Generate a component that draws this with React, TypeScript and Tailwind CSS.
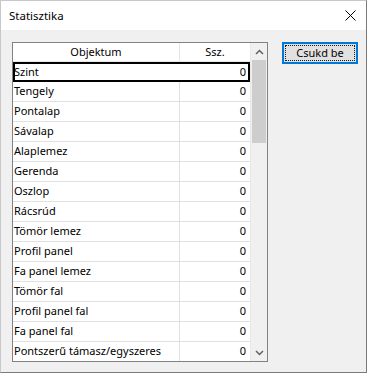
const rows = [
  "Szint",
  "Tengely",
  "Pontalap",
  "Sávalap",
  "Alaplemez",
  "Gerenda",
  "Oszlop",
  "Rácsrúd",
  "Tömör lemez",
  "Profil panel",
  "Fa panel lemez",
  "Tömör fal",
  "Profil panel fal",
  "Fa panel fal",
  "Pontszerű támasz/egyszeres",
];

const font = { fontFamily: '"Noto Sans", "Open Sans", sans-serif' };

export default function App() {
  return (
    <div
      className="flex h-[373px] w-[367px] flex-col overflow-hidden border border-[#7a7a7a] border-l-[#c8c8c8] border-t-[#c8c8c8] bg-[#f0f0f0] text-[11px] text-black"
      style={font}
    >
      {/* title bar */}
      <div className="flex h-[29px] shrink-0 items-center justify-between bg-white pl-[8px] pr-[10px]">
        <span className="text-[11.5px] leading-none">Statisztika</span>
        <svg width="11" height="11" viewBox="0 0 11 11">
          <path d="M0.5 0.5 L10.5 10.5 M10.5 0.5 L0.5 10.5" stroke="#000" strokeWidth="1" />
        </svg>
      </div>

      <div className="flex items-start pl-[11px] pt-[12px]">
        {/* list */}
        <div className="flex h-[320px] w-[256px] border border-[#828282] bg-white">
          <div className="flex w-[237px] flex-col overflow-hidden">
            <div className="flex h-[19px] shrink-0 border-b border-[#e5e5e5]">
              <div className="flex w-[167px] items-center justify-center border-r border-[#e5e5e5]">
                Objektum
              </div>
              <div className="flex flex-1 items-center justify-center">Ssz.</div>
            </div>
            {rows.map((name, i) => (
              <div
                key={name}
                className={
                  i === 0
                    ? "flex h-[20px] shrink-0 shadow-[inset_0_0_0_2px_#000]"
                    : "flex h-[20px] shrink-0 border-b border-[#e0e0e0]"
                }
              >
                <div
                  className={
                    i === 0
                      ? "flex w-[167px] items-center overflow-hidden whitespace-nowrap pl-[1px]"
                      : "flex w-[167px] items-center overflow-hidden whitespace-nowrap border-r border-[#e0e0e0] pl-[1px]"
                  }
                >
                  {name}
                </div>
                <div className="flex flex-1 items-center justify-end pr-[4px]">0</div>
              </div>
            ))}
          </div>

          {/* scrollbar */}
          <div className="flex w-[17px] flex-col border-l border-[#e8e8e8] bg-[#f0f0f0]">
            <div className="flex h-[17px] items-center justify-center">
              <svg width="9" height="6" viewBox="0 0 9 6">
                <path d="M1 5 L4.5 1.5 L8 5" fill="none" stroke="#606060" strokeWidth="1.5" />
              </svg>
            </div>
            <div className="flex flex-1 flex-col px-[1px]">
              <div className="h-[83px] bg-[#cdcdcd]" />
              <div className="flex-1" />
            </div>
            <div className="flex h-[17px] items-center justify-center">
              <svg width="9" height="6" viewBox="0 0 9 6">
                <path d="M1 1 L4.5 4.5 L8 1" fill="none" stroke="#606060" strokeWidth="1.5" />
              </svg>
            </div>
          </div>
        </div>

        {/* button */}
        <button className="relative ml-[14px] flex h-[22px] w-[76px] items-center justify-center border border-[#0078d7] bg-[#e1e1e1] shadow-[inset_0_0_0_1px_#0078d7]">
          <span className="absolute inset-[2px] border border-dotted border-[#1a1a1a]" />
          <span className="relative">Csukd be</span>
        </button>
      </div>
    </div>
  );
}
